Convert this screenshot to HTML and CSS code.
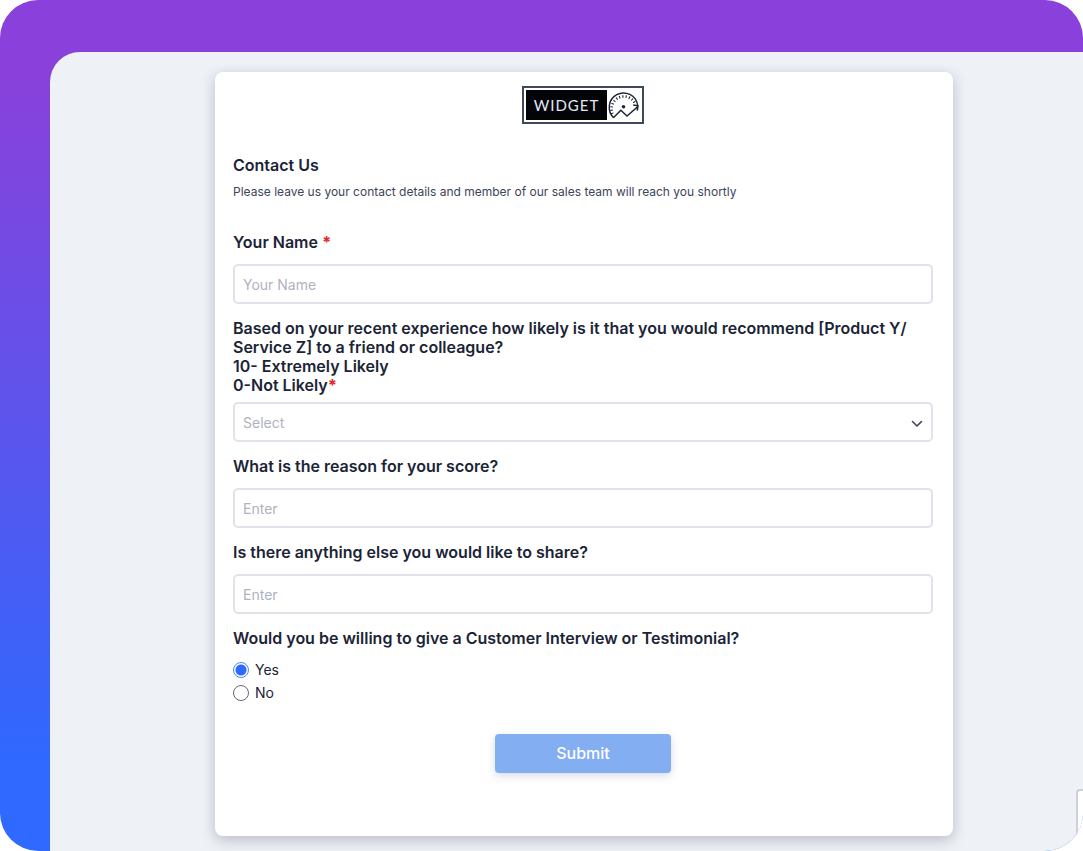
FILE: index.html
```html
<!DOCTYPE html>
<html lang="en">
<head>
<meta charset="utf-8">
<meta name="viewport" content="width=device-width, initial-scale=1">
<title>Contact Us</title>
<link rel="stylesheet" href="styles.css">
</head>
<body>
<div class="frame">
  <main class="panel">
    <form class="card">
      <div class="logo">
        <span class="logo-name">WIDGET</span>
        <svg class="logo-dial" viewBox="0 0 37 34" aria-hidden="true">
          <path d="M7.500 31.500A16.200 16.200 0 1 1 34.500 17" fill="none" stroke="#1c2438" stroke-width="1.600"/>
          <path d="M6 27A14 14 0 1 1 32 16" fill="none" stroke="#1c2438" stroke-width="3" stroke-dasharray="1.200 2.500"/>
          <path d="M7 31.500l8.500-8.500 7 6.500L34.500 19M29.500 17l5.500 1-1 5.500" fill="none" stroke="#1c2438" stroke-width="1.700"/>
          <circle cx="18.500" cy="19" r="2" fill="#1c2438"/>
        </svg>
      </div>
      <h1 class="title">Contact Us</h1>
      <p class="intro">Please leave us your contact details and member of our sales team will reach you shortly</p>
      <div class="fields">
        <div class="field">
          <label class="label" for="name">Your Name <span class="required">*</span></label>
          <input class="control" id="name" type="text" placeholder="Your Name">
        </div>
        <div class="field field-long">
          <label class="label" for="score">Based on your recent experience how likely is it that you would recommend [Product Y/<wbr>Service Z] to a friend or colleague?<br>10- Extremely Likely<br>0-Not Likely<span class="required">*</span></label>
          <div class="select-wrap">
            <select class="control select" id="score"><option>Select</option></select>
            <svg class="chevron" viewBox="0 0 12 8" aria-hidden="true"><path d="M1.500 1.500L6 6l4.500-4.500" fill="none" stroke="#3d4457" stroke-width="1.600" stroke-linecap="round" stroke-linejoin="round"/></svg>
          </div>
        </div>
        <div class="field">
          <label class="label" for="reason">What is the reason for your score?</label>
          <input class="control" id="reason" type="text" placeholder="Enter">
        </div>
        <div class="field">
          <label class="label" for="share">Is there anything else you would like to share?</label>
          <input class="control" id="share" type="text" placeholder="Enter">
        </div>
        <fieldset class="choices">
          <legend class="label">Would you be willing to give a Customer Interview or Testimonial?</legend>
          <label class="choice"><input class="radio" type="radio" name="interview" checked>Yes</label>
          <label class="choice"><input class="radio" type="radio" name="interview">No</label>
        </fieldset>
      </div>
      <button class="submit" type="button">Submit</button>
    </form>
    <div class="side-tab"></div>
  </main>
</div>
</body>
</html>
```
FILE: styles.css
```css
* { box-sizing: border-box; }

body {
  margin: 0;
  background: #fff;
  color: #1b2436;
  font-family: Inter, "Liberation Sans", sans-serif;
}

.frame {
  min-height: 100vh;
  display: flex;
  padding: 52px 0 0 50px;
  border-radius: 38px;
  overflow: hidden;
  background: linear-gradient(#8a40da 8%, #2f69ff 90%);
}

.panel {
  position: relative;
  flex: 1;
  padding: 20px 130px 15px 165px;
  border-top-left-radius: 30px;
  background: #eef1f6;
}

.card {
  display: flex;
  flex-direction: column;
  padding: 14px 20px 63px 18px;
  border-radius: 8px;
  background: #fff;
  box-shadow: 0 4px 14px rgba(30, 34, 50, 0.25);
}

.logo {
  align-self: center;
  display: flex;
  width: 122px;
  height: 38px;
  padding: 2px;
  border: 2px solid #414859;
}

.logo-name {
  width: 81px;
  background: #020407;
  color: #e4e7f2;
  font: 15px/30px Lato, sans-serif;
  letter-spacing: 1px;
  text-align: center;
}

.logo-dial { flex: 1; width: 34px; height: 30px; }

.title {
  margin: 31px 0 0;
  font-size: 16px;
  line-height: 20px;
  font-weight: 600;
}

.intro {
  margin: 8px 0 0;
  color: #3c4558;
  font-size: 12px;
  line-height: 18px;
}

.fields {
  display: flex;
  flex-direction: column;
  gap: 15px;
  margin-top: 32px;
}

.field { display: flex; flex-direction: column; gap: 12px; }
.field-long { gap: 7px; }

.label {
  padding: 0;
  font-size: 16px;
  line-height: 19px;
  font-weight: 600;
}

.required { color: #e32a2a; font-weight: 800; }

.control {
  width: 100%;
  height: 40px;
  padding: 0 8px;
  border: 2px solid #e2e3ea;
  border-radius: 5px;
  background: #fff;
  color: #1b2436;
  font: 14px Inter, "Liberation Sans", sans-serif;
}

.control::placeholder { color: #afb2bf; opacity: 1; }

.select-wrap { position: relative; }
.select { display: block; appearance: none; color: #afb2bf; }

.chevron {
  position: absolute;
  top: 18px;
  right: 10px;
  width: 12px;
  height: 8px;
  pointer-events: none;
}

.choices { margin: 0; padding: 0; border: 0; }
.choices .label { margin-bottom: 10px; }

.choice {
  display: flex;
  align-items: center;
  gap: 6px;
  height: 23px;
  font-size: 14px;
}

.radio {
  appearance: none;
  width: 16px;
  height: 16px;
  margin: 0;
  border: 1px solid #626877;
  border-radius: 50%;
}

.radio:checked {
  border-color: #4d86f8;
  background: radial-gradient(circle, #2f69ff 5px, #fff 6px);
}

.submit {
  align-self: center;
  width: 176px;
  height: 39px;
  margin-top: 30px;
  padding: 0 0 2px;
  border: 0;
  border-radius: 4px;
  background: #84aef2;
  color: #fff;
  font: 500 16px Inter, "Liberation Sans", sans-serif;
  box-shadow: 0 3px 8px rgba(60, 80, 130, 0.2);
}

.side-tab {
  position: absolute;
  right: 0;
  bottom: 0;
  width: 7px;
  height: 62px;
  border: solid #cdd0d8;
  border-width: 2px 0 0 2px;
  border-top-left-radius: 4px;
  background: #fff;
}
```
